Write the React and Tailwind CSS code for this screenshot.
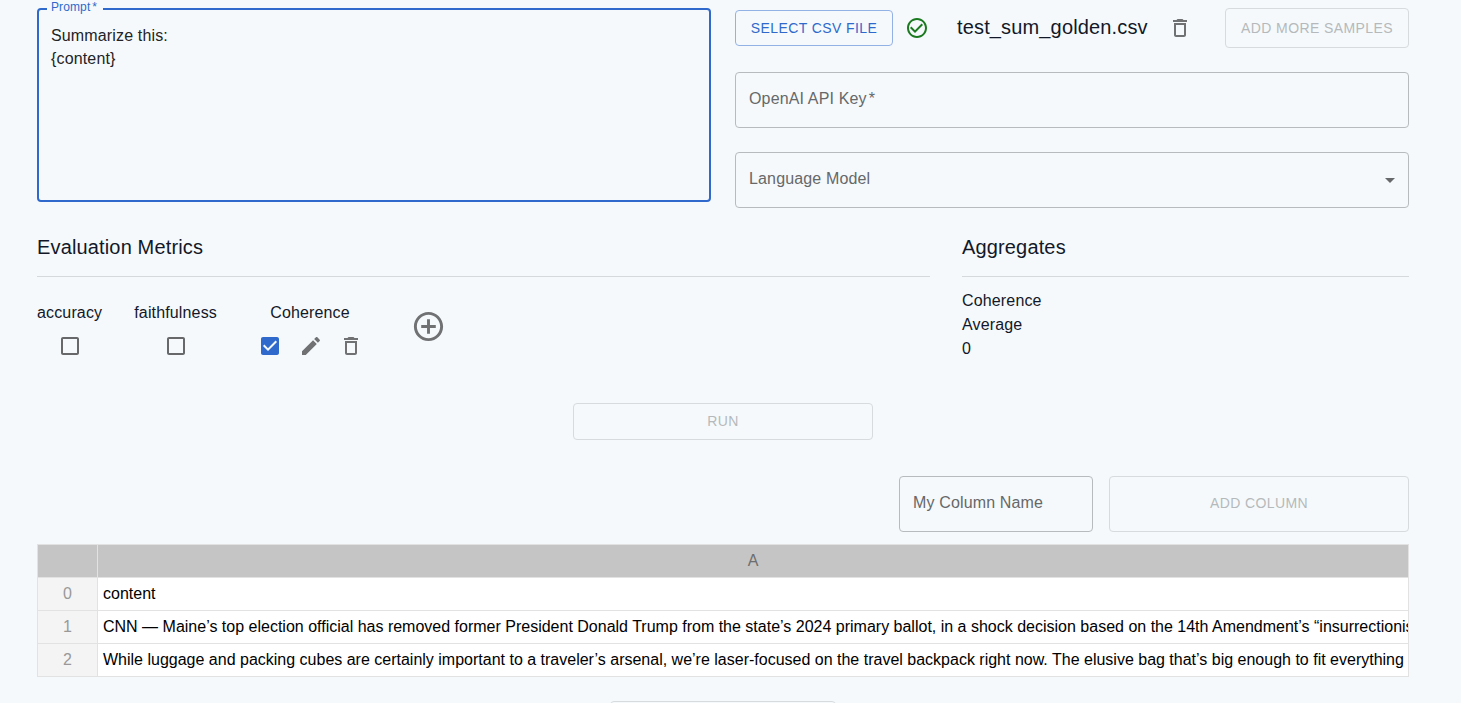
import React from 'react';

const PATHS = {
  trash: 'M6 19c0 1.1.9 2 2 2h8c1.1 0 2-.9 2-2V7H6v12zM8 9h8v10H8V9zm7.5-5l-1-1h-5l-1 1H5v2h14V4z',
  edit: 'M3 17.25V21h3.75L17.81 9.94l-3.75-3.75L3 17.25zM20.71 7.04c.39-.39.39-1.02 0-1.41l-2.34-2.34c-.39-.39-1.02-.39-1.41 0l-1.83 1.83 3.75 3.75 1.83-1.83z',
  plus: 'M13 7h-2v4H7v2h4v4h2v-4h4v-2h-4V7zm-1-5C6.48 2 2 6.48 2 12s4.48 10 10 10 10-4.48 10-10S17.52 2 12 2zm0 18c-4.41 0-8-3.59-8-8s3.59-8 8-8 8 3.59 8 8-3.59 8-8 8z',
  success: 'M16.59 7.58L10 14.17l-3.59-3.58L5 12l5 5 8-8zM12 2C6.48 2 2 6.48 2 12s4.48 10 10 10 10-4.48 10-10S17.52 2 12 2zm0 18c-4.42 0-8-3.58-8-8s3.58-8 8-8 8 3.58 8 8-3.58 8-8 8z',
  box: 'M19 5v14H5V5h14m0-2H5c-1.1 0-2 .9-2 2v14c0 1.1.9 2 2 2h14c1.1 0 2-.9 2-2V5c0-1.1-.9-2-2-2z',
  boxChecked: 'M19 3H5c-1.11 0-2 .9-2 2v14c0 1.1.89 2 2 2h14c1.11 0 2-.9 2-2V5c0-1.1-.89-2-2-2zm-9 14l-5-5 1.41-1.41L10 14.17l7.59-7.59L19 8l-9 9z',
  caret: 'M7 10l5 5 5-5z',
};

function Icon({ name, className = 'size-6' }) {
  return (
    <svg viewBox="0 0 24 24" fill="currentColor" className={`shrink-0 ${className}`}>
      <path d={PATHS[name]} />
    </svg>
  );
}

function DisabledButton({ className, children }) {
  return (
    <button
      disabled
      className={`flex items-center justify-center rounded border border-[#d7dbde] text-sm tracking-[0.4px] text-[#b6b9bb] ${className}`}
    >
      {children}
    </button>
  );
}

function Metric({ label, children }) {
  return (
    <div className="flex flex-col items-center">
      <div className="h-6 leading-6">{label}</div>
      <div className="flex h-[42px] items-center">{children}</div>
    </div>
  );
}

const ROWS = [
  'content',
  'CNN — Maine’s top election official has removed former President Donald Trump from the state’s 2024 primary ballot, in a shock decision based on the 14th Amendment’s “insurrectionist',
  'While luggage and packing cubes are certainly important to a traveler’s arsenal, we’re laser-focused on the travel backpack right now. The elusive bag that’s big enough to fit everything',
];

export default function App() {
  return (
    <div className="h-[703px] w-[1461px] overflow-hidden bg-[#f5f9fc] pl-[37px] pr-[52px] pt-2 font-['Liberation_Sans',Arial,sans-serif] text-base tracking-[0.15px] text-[#121828]">
      <div className="flex h-[200px] gap-6">
        <div className="relative h-[194px] w-[674px] rounded border-2 border-[#2f69cb] px-3 pt-[14px] leading-[23px] text-[#222426]">
          <label className="absolute -top-[11px] left-2 h-4 w-14 bg-[#f5f9fc] pl-1 text-xs leading-4 tracking-[0.11px] whitespace-nowrap text-[#2f69cb]">
            Prompt<span className="ml-[2px]">*</span>
          </label>
          <div>Summarize this:</div>
          <div>{'{content}'}</div>
        </div>

        <div className="flex w-[674px] flex-col">
          <div className="flex h-10 items-center">
            <button className="flex h-9 w-[158px] items-center justify-center rounded border border-[#92b2e5] text-sm tracking-[0.4px] text-[#2f69cb]">
              SELECT CSV FILE
            </button>
            <Icon name="success" className="ml-3 size-6 text-[#1b7a20]" />
            <span className="ml-7 w-[191px] pb-0.5 text-xl leading-8 whitespace-nowrap">test_sum_golden.csv</span>
            <Icon name="trash" className="ml-5 size-6 text-[#6f7173]" />
            <DisabledButton className="ml-auto h-10 w-[184px]">ADD MORE SAMPLES</DisabledButton>
          </div>
          <div className="mt-6 flex h-14 items-center rounded border border-[#b8bbbd] px-[13px] pb-[3px] text-[#666869]">
            OpenAI API Key<span className="ml-[2px]">*</span>
          </div>
          <div className="mt-6 flex h-14 items-center justify-between rounded border border-[#b8bbbd] pl-[13px] pr-[6px] text-[#666869]">
            <span className="pb-[3px]">Language Model</span>
            <Icon name="caret" />
          </div>
        </div>
      </div>

      <div className="mt-[23px] flex gap-8">
        <section className="w-[893px]">
          <h2 className="h-[46px] border-b border-[#d5d9dc] text-xl leading-8">Evaluation Metrics</h2>
          <div className="mt-6 flex h-[66px] gap-8">
            <Metric label="accuracy">
              <Icon name="box" className="size-6 text-[#666869]" />
            </Metric>
            <Metric label="faithfulness">
              <Icon name="box" className="size-6 text-[#666869]" />
            </Metric>
            <Metric label="Coherence">
              <div className="flex w-[122px] items-center gap-[17px] pl-[9px] text-[#6f7173]">
                <Icon name="boxChecked" className="size-6 text-[#2f69cb]" />
                <Icon name="edit" />
                <Icon name="trash" className="-ml-px size-6" />
              </div>
            </Metric>
            <div className="flex h-[51px] w-[51px] items-center justify-center text-[#6f7173]">
              <Icon name="plus" className="size-[35px]" />
            </div>
          </div>
        </section>
        <section className="w-[447px]">
          <h2 className="h-[46px] border-b border-[#d5d9dc] text-xl leading-8">Aggregates</h2>
          <div className="mt-3 leading-6">
            <div>Coherence</div>
            <div>Average</div>
            <div>0</div>
          </div>
        </section>
      </div>

      <div className="mt-9 flex justify-center">
        <DisabledButton className="h-[37px] w-[300px] pb-0.5">RUN</DisabledButton>
      </div>

      <div className="mt-9 flex justify-end gap-4">
        <div className="flex h-14 w-[194px] items-center rounded border border-[#b8bbbd] px-[13px] pb-[3px] text-[#666869]">
          My Column Name
        </div>
        <DisabledButton className="h-14 w-[300px] pb-0.5">ADD COLUMN</DisabledButton>
      </div>

      <div className="mt-3 border-l border-t border-[#e2e2e2] tracking-normal text-black">
        <div className="flex h-[33px] bg-[#c5c5c5] text-[#6e6e6e]">
          <div className="w-[60px] border-b border-r border-[#e2e2e2]" />
          <div className="flex flex-1 items-center justify-center border-b border-r border-[#e2e2e2]">A</div>
        </div>
        {ROWS.map((text, i) => (
          <div key={i} className="flex h-[33px] bg-white leading-8">
            <div className="w-[60px] shrink-0 border-b border-r border-[#e2e2e2] bg-[#f4f4f4] text-center text-[#999]">{i}</div>
            <div className="min-w-0 flex-1 overflow-hidden border-b border-r border-[#e2e2e2] pl-[5px] whitespace-nowrap">{text}</div>
          </div>
        ))}
      </div>

      <div className="mt-6 flex justify-center">
        <div className="h-9 w-[226px] rounded border border-[#d7dbde]" />
      </div>
    </div>
  );
}
